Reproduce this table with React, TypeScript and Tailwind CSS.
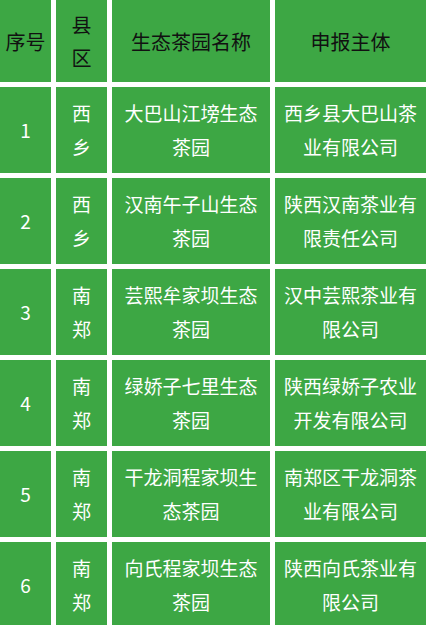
import { Fragment } from "react";

const rows = [
  { no: "1", county: ["西", "乡"], garden: ["大巴山江塝生态", "茶园"], owner: ["西乡县大巴山茶", "业有限公司"] },
  { no: "2", county: ["西", "乡"], garden: ["汉南午子山生态", "茶园"], owner: ["陕西汉南茶业有", "限责任公司"] },
  { no: "3", county: ["南", "郑"], garden: ["芸熙牟家坝生态", "茶园"], owner: ["汉中芸熙茶业有", "限公司"] },
  { no: "4", county: ["南", "郑"], garden: ["绿娇子七里生态", "茶园"], owner: ["陕西绿娇子农业", "开发有限公司"] },
  { no: "5", county: ["南", "郑"], garden: ["干龙洞程家坝生", "态茶园"], owner: ["南郑区干龙洞茶", "业有限公司"] },
  { no: "6", county: ["南", "郑"], garden: ["向氏程家坝生态", "茶园"], owner: ["陕西向氏茶业有", "限公司"] },
];

function Lines({ lines }: { lines: string[] }) {
  return (
    <div className="flex flex-col items-center">
      {lines.map((l, i) => (
        <span key={i} className="whitespace-nowrap">{l}</span>
      ))}
    </div>
  );
}

const head = "bg-[#3da744] h-[82px] flex items-center justify-center text-[20px] leading-[33px] text-[#111]";
const cell = "bg-[#3da744] h-[86px] flex items-center justify-center text-[19px] leading-[34px] text-white";

export default function App() {
  return (
    <div
      className="w-[426px] h-[625px] overflow-hidden bg-white"
      style={{ fontFamily: '"Noto Sans CJK SC", "Noto Sans", sans-serif' }}
    >
      <div className="grid grid-cols-[51px_51px_158px_1fr] gap-[5px]">
        {/* header */}
        <div className={head}>序号</div>
        <div className={head}><Lines lines={["县", "区"]} /></div>
        <div className={head}>生态茶园名称</div>
        <div className={head}>申报主体</div>

        {rows.map((r) => (
          <Fragment key={r.no}>
            <div className={cell}>{r.no}</div>
            <div className={cell}><Lines lines={r.county} /></div>
            <div className={cell}><Lines lines={r.garden} /></div>
            <div className={cell}><Lines lines={r.owner} /></div>
          </Fragment>
        ))}
      </div>
    </div>
  );
}
